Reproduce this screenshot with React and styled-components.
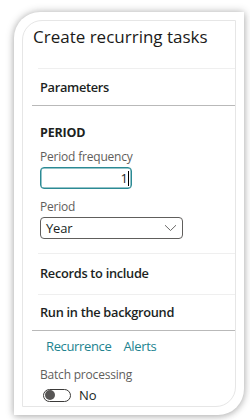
import React from "react";
import styled, { createGlobalStyle } from "styled-components";

const Global = createGlobalStyle`
  html, body { margin: 0; padding: 0; background: #ffffff; }
  body { font-family: "Open Sans", "Noto Sans", sans-serif; color: #201f1e; }
  * { box-sizing: border-box; }
`;

const Stage = styled.div`
  width: 250px;
  height: 420px;
  padding: 12px 6px 5px 14px;
`;

const Card = styled.div`
  width: 230px;
  height: 403px;
  background: #fff;
  border-radius: 26px 0 26px 0;
  box-shadow: 0 0 9px rgba(0, 0, 0, 0.28), 0 2px 6px rgba(0, 0, 0, 0.12);
  padding: 8px;
`;

const Panel = styled.div`
  height: 100%;
  border: 1px solid #e6e6e6;
  border-radius: 20px 0 20px 0;
  display: flex;
  flex-direction: column;
  overflow: hidden;
`;

const Header = styled.div`
  height: 47px;
  padding: 5px 0 0 10px;
`;

const Title = styled.h1`
  margin: 0;
  font-size: 17px;
  line-height: 22px;
  font-weight: 400;
  letter-spacing: 0;
  color: #1b1a19;
`;

const Rule = styled.div`
  height: 1px;
  flex: none;
  margin-left: ${(p) => (p.$strong ? 9 : 15)}px;
  background: ${(p) => (p.$strong ? "#b9b9b9" : "#efefef")};
`;

const SectionRow = styled.div`
  height: ${(p) => p.$h}px;
  display: flex;
  align-items: center;
  padding: 0 0 ${(p) => p.$pb || 0}px 17px;
  font-size: 12.8px;
  font-weight: 600;
  letter-spacing: -0.3px;
  color: #201f1e;
`;

const Group = styled.div`
  display: flex;
  flex-direction: column;
  align-items: flex-start;
  padding: 18px 0 14px 17px;
`;

const GroupTitle = styled.div`
  font-size: 12.5px;
  line-height: 18px;
  font-weight: 700;
  letter-spacing: -0.2px;
  margin-bottom: 6px;
`;

const Label = styled.div`
  font-size: 12px;
  line-height: 18px;
  color: #5f5e5c;
  letter-spacing: -0.2px;
  margin-top: ${(p) => p.$mt || 0}px;
  margin-bottom: 1px;
`;

const NumberInput = styled.div`
  width: 92px;
  height: 22px;
  border: 1px solid #2b8a94;
  box-shadow: inset 0 0 0 0.5px #2b8a94;
  border-radius: 4px;
  display: flex;
  align-items: center;
  justify-content: flex-end;
  padding-right: 2px;
  font-size: 13px;
`;

const Caret = styled.span`
  display: inline-block;
  width: 1px;
  height: 15px;
  background: #000;
`;

const Select = styled.div`
  width: 143px;
  height: 22px;
  border: 1px solid #605e5c;
  border-radius: 4px;
  display: flex;
  align-items: center;
  justify-content: space-between;
  padding: 0 5px 0 5px;
  font-size: 13px;
  letter-spacing: -0.2px;
  color: #201f1e;
`;

const Tabs = styled.div`
  display: flex;
  gap: 12px;
  padding: 3px 0 0 23px;
  height: 26px;
  align-items: center;
  font-size: 13px;
  letter-spacing: -0.35px;
  color: #22838f;
`;

const Field = styled.div`
  padding: 9px 0 0 17px;
  display: flex;
  flex-direction: column;
  align-items: flex-start;
`;

const ToggleRow = styled.div`
  display: flex;
  align-items: center;
  gap: 8px;
  padding-left: 3px;
  margin-top: 1px;
  font-size: 13px;
  line-height: 18px;
  color: #201f1e;
`;

const Toggle = styled.div`
  width: 28px;
  height: 13px;
  border: 1px solid #3b3a39;
  border-radius: 7px;
  display: flex;
  align-items: center;
  padding-left: 1px;
  &::before {
    content: "";
    width: 10px;
    height: 10px;
    border-radius: 50%;
    background: #575655;
  }
`;

export default function App() {
  return (
    <>
      <Global />
      <Stage>
        <Card>
          <Panel>
            <Header>
              <Title>Create recurring tasks</Title>
            </Header>
            <Rule />
            <SectionRow $h={36} $pb={1}>Parameters</SectionRow>
            <Rule $strong />
            <Group>
              <GroupTitle>PERIOD</GroupTitle>
              <Label>Period frequency</Label>
              <NumberInput>
                1<Caret />
              </NumberInput>
              <Label $mt={9}>Period</Label>
              <Select>
                <span>Year</span>
                <svg width="13" height="8" viewBox="0 0 13 8">
                  <path d="M1 1.2 L6.5 6.5 L12 1.2" fill="none" stroke="#5a5958" strokeWidth="0.9" />
                </svg>
              </Select>
            </Group>
            <Rule />
            <SectionRow $h={40} $pb={2}>Records to include</SectionRow>
            <Rule />
            <SectionRow $h={35} $pb={1}>Run in the background</SectionRow>
            <Rule $strong />
            <Tabs>
              <span>Recurrence</span>
              <span>Alerts</span>
            </Tabs>
            <Field>
              <Label>Batch processing</Label>
              <ToggleRow>
                <Toggle />
                <span>No</span>
              </ToggleRow>
            </Field>
          </Panel>
        </Card>
      </Stage>
    </>
  );
}
